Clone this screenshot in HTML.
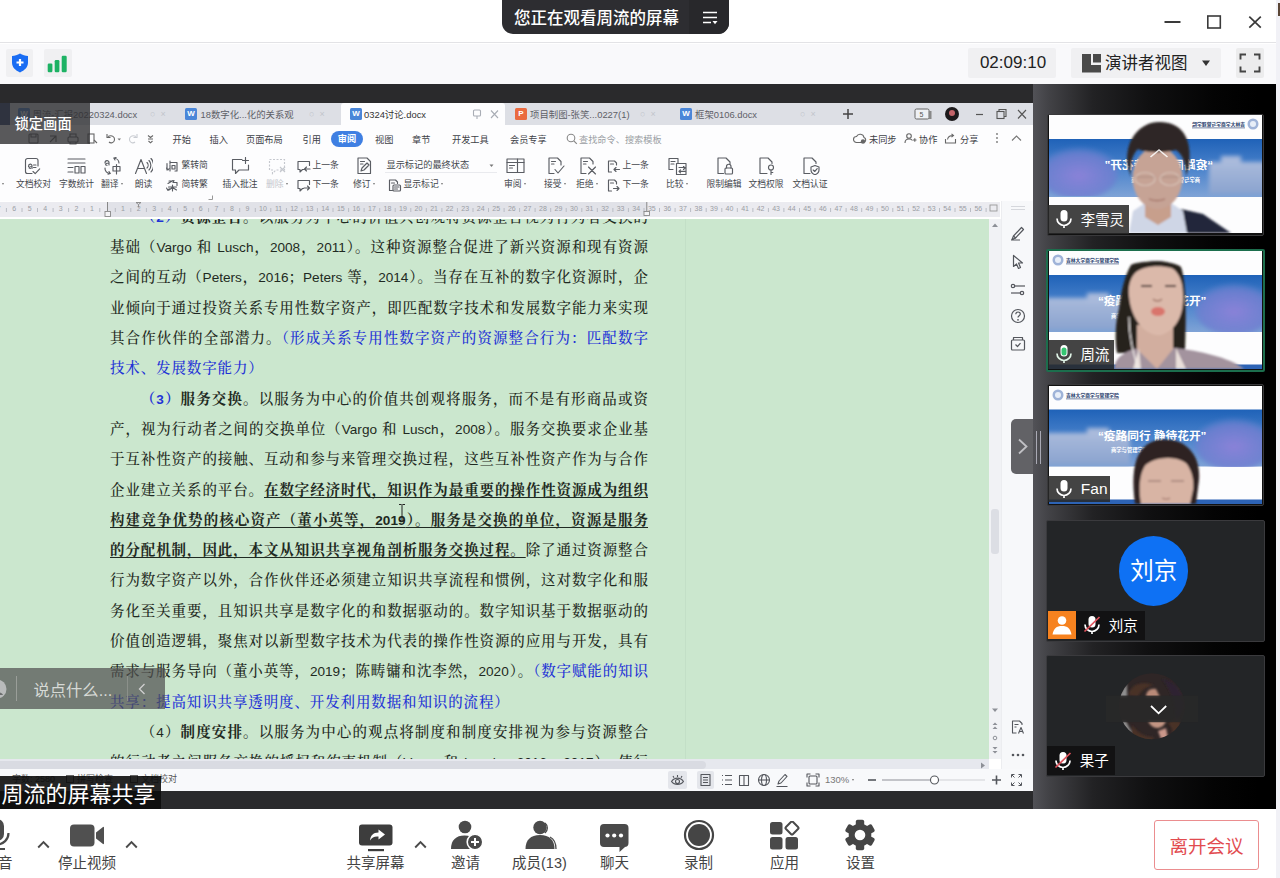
<!DOCTYPE html>
<html lang="zh-CN">
<head>
<meta charset="utf-8">
<title>会议</title>
<style>
*{box-sizing:border-box;margin:0;padding:0}
html,body{width:1280px;height:878px;overflow:hidden;background:#fff}
body{position:relative;font-family:"Liberation Sans","Noto Sans CJK SC",sans-serif;color:#333}
.abs{position:absolute}
i{font-style:normal}
#app{position:absolute;left:0;top:0;width:1280px;height:878px;overflow:hidden;background:#fff}
/* top bars */
#bar1{position:absolute;left:0;top:0;width:1280px;height:43px;background:#fff;border-bottom:1px solid #e3e3e6}
#pill{position:absolute;left:502px;top:0;width:227px;height:34px;background:#2d2d31;border-radius:0 0 11px 11px;color:#fff;font-size:16.5px;line-height:37px;font-weight:500}
#pill .t{position:absolute;left:12px;top:0;white-space:nowrap}
#pill .m{position:absolute;left:187px;top:0;width:40px;height:34px;background:#28282b;border-radius:0 0 11px 0}
#bar2{position:absolute;left:0;top:44px;width:1280px;height:40px;background:#f9f9fb}
.chip{position:absolute;background:#f0f0f2;border-radius:2px}
/* stage */
#stage{position:absolute;left:0;top:84px;width:1033px;height:725px;background:#2a2a2c;overflow:hidden}
#panel{position:absolute;left:1033px;top:84px;width:243px;height:725px;background:linear-gradient(90deg,#525257 0px,#424246 16px,#222224 60px,#101011 115px,#040404 180px,#000 225px)}
#edge{position:absolute;left:1276px;top:0;width:4px;height:878px;background:#f1f1f6}
/* WPS */
#wps{position:absolute;left:0;top:18.5px;width:1032.5px;height:688px;background:#fff;overflow:hidden;font-size:9.2px;color:#44474d}
#tabbar{position:absolute;left:0;top:0;width:100%;height:22px;background:#dddfe5}
#tabact{position:absolute;left:341px;top:0;width:164px;height:23px;background:#fdfdfe;border-radius:3px 3px 0 0}
.wi{position:absolute;top:5.5px;width:12px;height:12px;border-radius:1.5px;color:#fff;font-size:8px;line-height:12px;text-align:center;font-weight:700}
.tt{position:absolute;top:0;height:22px;line-height:23px;font-size:9.400px;color:#5d6067;white-space:nowrap}
.tx{position:absolute;top:0;height:22px;line-height:22px;font-size:9px;color:#c2c5cc;white-space:nowrap}
#menurow{position:absolute;left:0;top:22px;width:100%;height:26px;background:#fdfdfe}
.mn{position:absolute;top:8px;height:14px;line-height:14px;font-size:9.2px;white-space:nowrap;color:#3e4147}
#rev{position:absolute;left:331px;top:6.500px;width:32px;height:15.500px;border-radius:8px;background:#3f7fe2;color:#fff;font-weight:700;text-align:center;line-height:16.500px;font-size:9.2px}
#ribbon{position:absolute;left:0;top:48px;width:100%;height:50px;background:#fdfdfe}
.rl{position:absolute;top:27.800px;width:60px;text-align:center;height:13px;line-height:13px;white-space:nowrap;font-size:8.800px}
.rs{position:absolute;height:13px;line-height:13px;white-space:nowrap;font-size:8.800px}
.rl i,.rs i{display:inline-block;width:0;height:0;border:1.6px solid transparent;border-top:2px solid #777;margin:0 0 0 2.5px;vertical-align:1px}
#dd{position:absolute;left:385px;top:7.500px;width:112px;height:15px;line-height:15px;padding-left:1.5px;font-size:9.2px;border-bottom:1px solid #e9eaee;white-space:nowrap}
#ruler{position:absolute;left:0;top:99.200px;width:1000px;height:15px;background:#ebebf0;overflow:hidden}
#ruler span{position:absolute;top:1.500px;width:16px;text-align:center;font-size:7px;line-height:11px;color:#9a9da4}
#doc{position:absolute;left:0;top:116.500px;width:989px;height:540px;background:#cbe7ce;overflow:hidden}
#txt{position:absolute;left:110px;top:-17.200px;width:538px;font-family:"Liberation Sans","Noto Serif CJK SC",serif;font-size:14.500px;color:#1f2a22;font-weight:500}
#txt p{position:absolute;left:0;width:538px;height:30px;line-height:30px;white-space:nowrap;text-align:justify;text-align-last:justify}
#txt p.ind{left:30.700px;width:507.300px}
#txt p.last{text-align:left;text-align-last:left;letter-spacing:.870px}
#txt p.last .en{letter-spacing:0}
#txt .en{font-family:"Liberation Sans",sans-serif;font-size:13.600px;font-weight:400;letter-spacing:0}
#txt .bl{color:#1f33d6}
#txt .bd{font-weight:700}
#txt .bu{font-weight:700;text-decoration:underline;text-decoration-thickness:1.300px;text-underline-offset:2px}
#txt .bd .en,#txt .bu .en{font-weight:700}
#vscroll{position:absolute;left:989px;top:116.500px;width:12px;height:540px;background:#f1f2f5}
#side{position:absolute;left:1001px;top:98px;width:32px;height:590px;background:#f7f8fa;border-left:1px solid #ecedf0}
#hscroll{position:absolute;left:0;top:656.300px;width:989px;height:10.500px;background:#e6e8ee}
#status{position:absolute;left:0;top:666.800px;width:1032.500px;height:21.500px;background:#f8f9fb}
.st{position:absolute;top:4px;height:13px;line-height:13px;font-size:9px;white-space:nowrap;color:#555}
.cb{display:inline-block;width:8px;height:8px;border:1px solid #666;margin-right:3px;vertical-align:-1px}
.tri{display:inline-block;width:0;height:0;border:1.600px solid transparent;border-top:2px solid #777;margin-left:3px;vertical-align:1px}
.tile{position:absolute;left:14.300px;width:216.500px;height:122px;border:1.500px solid #39393b;border-radius:2px;background:#111;overflow:hidden}
.tile.act{border:2px solid #1c6e4d;left:13px;width:218.500px;height:123px}
.tile.dk{background:#232527;border-color:#3a3a3d;left:13.300px;width:218.300px}
.tile .vid{position:absolute;left:.5px;top:.5px}
.tile.act .vid{left:.5px;top:.5px}
.nm{position:absolute;left:0;bottom:1px;height:29px;background:rgba(40,40,40,.87);color:#fff;white-space:nowrap}
.nm svg{position:absolute;left:7px;top:50%;margin-top:-10px}
.nm span{position:absolute;left:32.500px;top:50%;margin-top:-14.500px;line-height:30px;font-size:14.400px}
.handle{position:absolute;left:2.500px;top:347px;width:7px;height:33px}
.handle i{position:absolute;top:0;width:1.200px;height:33px;background:#a9a9b4}
.handle i+i{left:4.700px}
/* bottom */
#bottom{position:absolute;left:0;top:809px;width:1276px;height:69px;background:#fff}
.blabel{position:absolute;top:45px;font-size:14.500px;line-height:18px;color:#444;white-space:nowrap;text-align:center}
</style>
</head>
<body>
<div id="app">
<div id="bar1">
  <div id="pill"><span class="t">您正在观看周流的屏幕</span><div class="m"></div>
    <svg class="abs" style="left:199px;top:10px" width="18" height="16" viewBox="0 0 18 16"><g stroke="#fff" stroke-width="1.7" fill="none"><path d="M2 2.5h14M2 7.5h14M2 12.5h8"/></g><path d="M11.5 11h5l-2.5 3.2z" fill="#fff"/></svg>
  </div>
  <svg class="abs" style="left:1160px;top:10px" width="110" height="24" viewBox="0 0 110 24"><g stroke="#3a3a3a" fill="none"><path d="M4.5 12h16" stroke-width="2"/><rect x="47.8" y="6" width="12.5" height="12" stroke-width="1.6"/><path d="M89.3 6.7l11.5 11M100.8 6.7l-11.5 11" stroke-width="1.7"/></g></svg>
</div>
<div id="bar2">
  <div class="chip" style="left:6px;top:5px;width:27px;height:28px"></div>
  <svg class="abs" style="left:9px;top:8px" width="22" height="22" viewBox="0 0 22 22"><path d="M11 1.6c2.6 1.7 5.3 2.3 8 2.4v6.6c0 4.6-3.3 7.9-8 9.9-4.700-2-8-5.300-8-9.900V4c2.700-.1 5.400-.7 8-2.400z" fill="#1a6df3"/><path d="M11 7v7M7.500 10.500h7" stroke="#fff" stroke-width="2.200" fill="none"/></svg>
  <div class="chip" style="left:44px;top:5px;width:28px;height:28px"></div>
  <svg class="abs" style="left:44px;top:5px" width="28" height="28" viewBox="0 0 28 28"><g fill="#1db264"><rect x="3.700" y="14.500" width="4.700" height="8.700" rx="1.200"/><rect x="10.700" y="11" width="4.700" height="12.200" rx="1.200"/><rect x="17.700" y="6.800" width="5" height="16.400" rx="1.200"/></g></svg>
  <div class="chip" style="left:968px;top:4px;width:88px;height:30px"></div>
  <div class="abs" style="left:968px;top:4px;width:88px;height:30px;line-height:30px;text-align:center;font-size:17px;color:#222;padding-left:2px">02:09:10</div>
  <div class="chip" style="left:1071px;top:4px;width:150px;height:30px"></div>
  <svg class="abs" style="left:1082px;top:10px" width="20" height="19" viewBox="0 0 20 19"><path d="M0 0h9v11h10v7.500H0z" fill="#4a4a4a"/><rect x="11" y="0" width="8" height="8.500" fill="#4a4a4a"/></svg>
  <div class="abs" style="left:1105px;top:4px;height:30px;line-height:30px;font-size:16.500px;color:#222;white-space:nowrap">演讲者视图</div>
  <svg class="abs" style="left:1201px;top:16px" width="10" height="7" viewBox="0 0 10 7"><path d="M1 .500h8L5 6z" fill="#333"/></svg>
  <div class="chip" style="left:1236px;top:4px;width:28px;height:30px;background:#ececed"></div>
  <svg class="abs" style="left:1239px;top:9px" width="22" height="20" viewBox="0 0 22 20"><g stroke="#444" stroke-width="1.900" fill="none"><path d="M1.500 6.500V1.500h5.500M15 1.500h5.500v5M20.500 13.500v5H15M7 18.500H1.500v-5"/></g></svg>
</div>
<div id="stage">
<div id="wps">
<div id="tabbar">
<div class="abs" style="left:0;top:0;width:10px;height:22px;background:#2f4273"></div>
<div class="wi" style="left:18px;background:#4a86d8">W</div>
<div class="tt" style="left:32.5px">周流-汇报20220324.docx</div>
<div class="tx" style="left:150px">○&nbsp; ×</div>
<div class="wi" style="left:185px;background:#4a86d8">W</div>
<div class="tt" style="left:200.5px">18数字化...化的关系观</div>
<div class="tx" style="left:309px">○&nbsp; ×</div>
<div id="tabact"></div>
<div class="wi" style="left:350px;background:#4a86d8">W</div>
<div class="tt" style="left:364px;color:#333">0324讨论.docx</div>
<svg class="abs" style="left:472px;top:6px" width="28" height="11" viewBox="0 0 28 11"><g stroke="#a9adb5" stroke-width="1.1" fill="none"><rect x="1.5" y="1" width="7" height="6" rx="1"/><path d="M5 7v3M19 1.500l7 7.500M26 1.500l-7 7.500"/></g></svg>
<div class="wi" style="left:515px;background:#ea6a3f">P</div>
<div class="tt" style="left:530px">项目制图-张笑...0227(1)</div>
<div class="tx" style="left:640px">○&nbsp; ×</div>
<div class="wi" style="left:680px;background:#4a86d8">W</div>
<div class="tt" style="left:695px">框架0106.docx</div>
<div class="tx" style="left:800px">○&nbsp; ×</div>
<svg class="abs" style="left:842px;top:5px" width="12" height="12" viewBox="0 0 12 12"><path d="M6 1v10M1 6h10" stroke="#444" stroke-width="1.500"/></svg>
<svg class="abs" style="left:914px;top:4px" width="120" height="15" viewBox="0 0 120 15"><rect x="1" y="2" width="14" height="10" rx="1.500" stroke="#666" fill="#eef0f4" stroke-width="1"/><rect x="15" y="4" width="2.500" height="8" fill="#888"/><text x="5.500" y="10" font-size="7" fill="#555" font-family="Liberation Sans,sans-serif">5</text><circle cx="38" cy="7" r="7" fill="#1d1a1c"/><circle cx="38" cy="6" r="3" fill="#c4646a"/><path d="M62 7.500h7" stroke="#555" stroke-width="1.200"/><g stroke="#555" stroke-width="1.100" fill="none"><rect x="83" y="4.500" width="7" height="7"/><path d="M85 4.500V2.500h7v7h-2"/><path d="M104 3l8 8.500M112 3l-8 8.500"/></g></svg>
</div>
<div id="menurow">
<svg class="abs" style="left:28px;top:7px" width="135" height="14" viewBox="0 0 135 14"><g stroke="#666" stroke-width="1.100" fill="none"><rect x="1" y="2" width="9" height="9" rx="1"/><path d="M3 2v3h5V2"/><path d="M22 4h6v6M28 4l-6 6"/><rect x="40" y="5" width="10" height="5" rx="1"/><path d="M42 5V2h6v3M42 10v2h6v-2"/><rect x="60" y="2" width="6" height="9"/><path d="M66 8l3 3"/><path d="M80 4.500c4-2 7 .500 6.500 3.500s-4 3.500-5.500 2M79 2v3.500h3.500"/></g><path d="M89.500 6.500h3.500l-1.750 2z" fill="#777"/><g stroke="#c9ccd2" stroke-width="1.100" fill="none"><path d="M108 4.500c-4-2-7 .500-6.500 3.500s4 3.500 5.500 2M109 2v3.500h-3.500"/></g><g stroke="#666" stroke-width="1.100" fill="none"><path d="M120 3.500l2.500 2 2.500-2M120 7h5M120.500 9l2 1.800 2-1.800"/></g></svg>
<div class="mn" style="left:172.5px">开始</div>
<div class="mn" style="left:209.5px">插入</div>
<div class="mn" style="left:246px">页面布局</div>
<div class="mn" style="left:302.5px">引用</div>
<div class="mn" style="left:375px">视图</div>
<div class="mn" style="left:412px">章节</div>
<div class="mn" style="left:452px">开发工具</div>
<div class="mn" style="left:510px">会员专享</div>
<div id="rev">审阅</div>
<svg class="abs" style="left:566px;top:8px" width="12" height="12" viewBox="0 0 12 12"><circle cx="5" cy="5" r="3.800" stroke="#888" fill="none" stroke-width="1.100"/><path d="M7.800 7.800l3 3" stroke="#888" stroke-width="1.200"/></svg>
<div class="mn" style="left:579px;color:#9a9da3">查找命令、搜索模板</div>
<svg class="abs" style="left:853px;top:8px" width="14" height="11" viewBox="0 0 14 11"><path d="M3.500 9.500a3 3 0 0 1 0-6a4 4 0 0 1 7.500 1a2.600 2.600 0 0 1-.500 5z" stroke="#666" fill="none" stroke-width="1.100"/><circle cx="10" cy="8.500" r="2.200" fill="#666"/></svg>
<div class="mn" style="left:869px">未同步</div>
<svg class="abs" style="left:904px;top:8px" width="13" height="11" viewBox="0 0 13 11"><circle cx="5" cy="3" r="2.300" stroke="#666" fill="none" stroke-width="1.100"/><path d="M1 10c0-3 2-4 4-4s3 .500 3.500 1.500M9 7h3.500M10.800 5.200v3.600" stroke="#666" fill="none" stroke-width="1.100"/></svg>
<div class="mn" style="left:919px">协作</div>
<svg class="abs" style="left:944px;top:8px" width="13" height="11" viewBox="0 0 13 11"><path d="M1.500 6v4h10V6M3.500 6.500c.500-3 3-4 5.500-4M7.500.800l2 1.700-2 1.700" stroke="#666" fill="none" stroke-width="1.100"/></svg>
<div class="mn" style="left:960px">分享</div>
<svg class="abs" style="left:994px;top:7px" width="30" height="13" viewBox="0 0 30 13"><g fill="#777"><circle cx="3" cy="2" r=".900"/><circle cx="3" cy="6" r=".900"/><circle cx="3" cy="10" r=".900"/></g><path d="M18 8.500l4.500-4.500 4.500 4.500" stroke="#777" fill="none" stroke-width="1.100"/></svg>
</div>
<div id="ribbon">
<div class="rl" style="left:-28px"><i></i></div>
<svg class="abs" style="left:24.0px;top:6.500px" width="19" height="18" viewBox="0 0 19 18"><g stroke="#5a5d63" stroke-width="1.150" fill="none" stroke-linejoin="round" stroke-linecap="round"><path d="M3.500 1.500h8.500a2 2 0 0 1 2 2V9M3.500 1.500a2 2 0 0 0-2 2v11a2 2 0 0 0 2 2H8"/><path d="M4.500 9.500c0-3 3.500-3 3.500-.500v2.500M8 9.500c-3 0-4 2-1.500 2M9.500 8h2.500M9.500 10.500h2.500M9 14.500l2.200 2.200 4.500-4.800"/></g></svg>
<div class="rl" style="left:3.5px">文档校对</div>
<svg class="abs" style="left:67.0px;top:6.500px" width="19" height="18" viewBox="0 0 19 18"><g stroke="#5a5d63" stroke-width="1.150" fill="none" stroke-linejoin="round" stroke-linecap="round"><path d="M1 2h17M1 6h17M1 10.500h5M1 15h5"/><rect x="8" y="9.500" width="4" height="6.500"/><rect x="14" y="9.500" width="4" height="6.500"/></g></svg>
<div class="rl" style="left:46.5px">字数统计</div>
<svg class="abs" style="left:102.5px;top:6.500px" width="19" height="18" viewBox="0 0 19 18"><g stroke="#5a5d63" stroke-width="1.150" fill="none" stroke-linejoin="round" stroke-linecap="round"><path d="M2 6c0-3 4-3 4-.500V8M6 6c-3.500 0-4.500 2-2 2.300M2 11a5 5 0 0 0 5 5.500M6 14.500l1.300 2-2.300.600"/><rect x="10" y="9.500" width="7" height="4.500"/><path d="M13.500 7.500v9.500M16 6A5 5 0 0 0 11 1.200M12 3l-1.200-2 2.300-.500"/></g></svg>
<div class="rl" style="left:82px">翻译<i></i></div>
<svg class="abs" style="left:134.0px;top:6.500px" width="19" height="18" viewBox="0 0 19 18"><g stroke="#5a5d63" stroke-width="1.150" fill="none" stroke-linejoin="round" stroke-linecap="round"><path d="M1.500 16.500L7 2.500l5.500 14M3.500 11.500h7M13 5.500c1.500 1.500 1.500 4 0 5.500M15 3.500c2.500 2.500 2.500 7 0 9.500M17 1.500c3.500 3.500 3.500 10 0 13.500"/></g></svg>
<div class="rl" style="left:113.5px">朗读</div>
<svg class="abs" style="left:166px;top:9px" width="14" height="13" viewBox="0 0 14 13"><g stroke="#5a5d63" stroke-width="1.150" fill="none" stroke-linejoin="round" stroke-linecap="round"><path d="M1 3.500V10M4 1v3M4 2.500h7v8.500h-2M4 5v6M6 5.500h3v3.500H6z"/><path d="M.500 8l1.500 2 1.200-1.500" /></g></svg>
<div class="rs" style="left:181.5px;top:8.5px">繁转简</div>
<svg class="abs" style="left:166px;top:28px" width="14" height="13" viewBox="0 0 14 13"><g stroke="#5a5d63" stroke-width="1.150" fill="none" stroke-linejoin="round" stroke-linecap="round"><path d="M3 2h3M2 4.500l5-3M8 1.500l-1 2h4v3M2.500 8h8M6.500 6v6M3 11l3.500-2.500 4 2.500"/><path d="M.500 9l1.500 2.500 1.200-1.800"/></g></svg>
<div class="rs" style="left:181.5px;top:27.5px">简转繁</div>
<svg class="abs" style="left:208px;top:44px" width="5" height="5" viewBox="0 0 5 5"><path d="M4.500 .500v4H.500" stroke="#999" fill="none"/></svg>
<svg class="abs" style="left:230.5px;top:6.500px" width="19" height="18" viewBox="0 0 19 18"><g stroke="#5a5d63" stroke-width="1.150" fill="none" stroke-linejoin="round" stroke-linecap="round"><path d="M11 2.500H1.500v10.500h3v3.500l3.500-3.500h9.500V8M14.500 .500v6M11.500 3.500h6"/></g></svg>
<div class="rl" style="left:210px">插入批注</div>
<svg class="abs" style="left:267.5px;top:6.500px" width="19" height="18" viewBox="0 0 19 18"><g stroke="#c5c8ce" stroke-width="1.150" fill="none" stroke-dasharray="2 1.500"><path d="M1.500 2.500h15v10.500H8l-3.500 3.500v-3.500h-3z"/></g><path d="M12 10l5 5M17 10l-5 5" stroke="#c5c8ce" stroke-width="1.150"/></svg>
<div class="rl" style="left:247px;color:#c3c6cc">删除<i></i></div>
<svg class="abs" style="left:297px;top:9px" width="14" height="13" viewBox="0 0 14 13"><g stroke="#5a5d63" stroke-width="1.150" fill="none" stroke-linejoin="round" stroke-linecap="round"><path d="M1 1.500h11.500v4M1 1.500v8h2v2.500l2.500-2.500h2"/><path d="M13 9H7.500M9.500 7L7.500 9l2 2"/></g></svg>
<div class="rs" style="left:312.5px;top:8.5px">上一条</div>
<svg class="abs" style="left:297px;top:28px" width="14" height="13" viewBox="0 0 14 13"><g stroke="#5a5d63" stroke-width="1.150" fill="none" stroke-linejoin="round" stroke-linecap="round"><path d="M1 1.500h11.500v4M1 1.500v8h2v2.500l2.500-2.500h1"/><path d="M7 9h5.500M10.500 7l2 2-2 2"/></g></svg>
<div class="rs" style="left:312.5px;top:27.5px">下一条</div>
<svg class="abs" style="left:354.5px;top:6.500px" width="19" height="18" viewBox="0 0 19 18"><g stroke="#5a5d63" stroke-width="1.150" fill="none" stroke-linejoin="round" stroke-linecap="round"><path d="M3 1h9l3.500 3.500v12H3z"/><path d="M5.500 4.500h4M5.500 7h2.500M6 14l1-3 5-5 2 2-5 5z"/></g></svg>
<div class="rl" style="left:334px">修订<i></i></div>
<div id="dd">显示标记的最终状态<svg class="abs" style="right:3px;top:6px" width="5" height="4" viewBox="0 0 5 4"><path d="M.500 .500h4L2.500 3z" fill="#777"/></svg></div>
<svg class="abs" style="left:388px;top:28px" width="14" height="13" viewBox="0 0 14 13"><g stroke="#5a5d63" stroke-width="1.150" fill="none" stroke-linejoin="round" stroke-linecap="round"><path d="M9.500 4.500V3L7.500 1H1.500v10.500h3"/><path d="M3.500 4h3"/><rect x="5" y="6" width="7.500" height="6" rx="1"/><path d="M6.500 8h4.500M6.500 10h3"/></g></svg>
<div class="rs" style="left:403.5px;top:27.5px">显示标记<i></i></div>
<svg class="abs" style="left:505.5px;top:6.500px" width="19" height="18" viewBox="0 0 19 18"><g stroke="#5a5d63" stroke-width="1.150" fill="none" stroke-linejoin="round" stroke-linecap="round"><rect x="1" y="2" width="17" height="13.500"/><path d="M11.500 2v13.500M1 5.500h17M3.500 8.500h5M3.500 11h3"/></g></svg>
<div class="rl" style="left:485px">审阅<i></i></div>
<svg class="abs" style="left:545.5px;top:6.500px" width="19" height="18" viewBox="0 0 19 18"><g stroke="#5a5d63" stroke-width="1.150" fill="none" stroke-linejoin="round" stroke-linecap="round"><path d="M15 8V4.500L11.500 1H3v15.500h5"/><path d="M5.500 4.500h4M5.500 7h2.500M9 12.500l3 3.500 6-7"/></g></svg>
<div class="rl" style="left:525px">接受<i></i></div>
<svg class="abs" style="left:577.5px;top:6.500px" width="19" height="18" viewBox="0 0 19 18"><g stroke="#5a5d63" stroke-width="1.150" fill="none" stroke-linejoin="round" stroke-linecap="round"><path d="M15 7V4.500L11.500 1H3v15.500h5"/><path d="M5.500 4.500h4M5.500 7h2.500M10.500 10l7 7M17.500 10l-7 7"/></g></svg>
<div class="rl" style="left:557px">拒绝<i></i></div>
<svg class="abs" style="left:607px;top:9px" width="14" height="13" viewBox="0 0 14 13"><g stroke="#5a5d63" stroke-width="1.150" fill="none" stroke-linejoin="round" stroke-linecap="round"><path d="M9.500 5V3L7.500 1H1.500v11h3"/><path d="M3.500 4h3M12.500 9.500H7M9 7.500l-2 2 2 2"/></g></svg>
<div class="rs" style="left:622.5px;top:8.5px">上一条</div>
<svg class="abs" style="left:607px;top:28px" width="14" height="13" viewBox="0 0 14 13"><g stroke="#5a5d63" stroke-width="1.150" fill="none" stroke-linejoin="round" stroke-linecap="round"><path d="M9.500 5V3L7.500 1H1.500v11h3"/><path d="M3.500 4h3M6.500 9.500H12M10 7.500l2 2-2 2"/></g></svg>
<div class="rs" style="left:622.5px;top:27.5px">下一条</div>
<svg class="abs" style="left:667.5px;top:6.500px" width="19" height="18" viewBox="0 0 19 18"><g stroke="#5a5d63" stroke-width="1.150" fill="none" stroke-linejoin="round" stroke-linecap="round"><path d="M1 1.500h9v4M1 1.500v11h4M3 4.500h4M3 7h3"/><path d="M8.500 6.500h9.500v11H8.500zM15.500 9.500l1.500 1.500-1.500 1.500M11 10.500h6M12.500 12.800L11 14.300l1.500 1.500M17 14.300h-6"/></g></svg>
<div class="rl" style="left:647px">比较<i></i></div>
<svg class="abs" style="left:714.5px;top:6.500px" width="19" height="18" viewBox="0 0 19 18"><g stroke="#5a5d63" stroke-width="1.150" fill="none" stroke-linejoin="round" stroke-linecap="round"><path d="M15 7V5L11 1H3v15.500h5.500"/><rect x="10" y="11" width="7.500" height="6" rx="1"/><path d="M11.500 11V9.500a2.200 2.200 0 0 1 4.500 0V11"/></g></svg>
<div class="rl" style="left:694px">限制编辑</div>
<svg class="abs" style="left:756.5px;top:6.500px" width="19" height="18" viewBox="0 0 19 18"><g stroke="#5a5d63" stroke-width="1.150" fill="none" stroke-linejoin="round" stroke-linecap="round"><path d="M15 6.500V5L11 1H3v15.500h7"/><circle cx="14" cy="10.500" r="2.500"/><path d="M14 13v4.500M14 15.500h1.800"/></g></svg>
<div class="rl" style="left:736px">文档权限</div>
<svg class="abs" style="left:800.5px;top:6.500px" width="19" height="18" viewBox="0 0 19 18"><g stroke="#5a5d63" stroke-width="1.150" fill="none" stroke-linejoin="round" stroke-linecap="round"><path d="M15 6.500V5L11 1H3v15.500h6"/><path d="M14 8.500l4 1.500v3c0 2.500-2 4-4 4.800-2-.800-4-2.300-4-4.800v-3zM12.200 13l1.500 1.500 2.500-2.800"/></g></svg>
<div class="rl" style="left:780px">文档认证</div>
</div>
<div id="ruler">
<div class="abs" style="left:108px;top:0;width:539px;height:15px;background:#e1e2e8"></div>
<span style="left:-9.4px">7</span>
<span style="left:6.2px">6</span>
<span style="left:21.8px">5</span>
<span style="left:37.3px">4</span>
<span style="left:52.8px">3</span>
<span style="left:68.4px">2</span>
<span style="left:84.0px">1</span>
<span style="left:115.0px">1</span>
<span style="left:130.6px">2</span>
<span style="left:146.2px">3</span>
<span style="left:161.7px">4</span>
<span style="left:177.2px">5</span>
<span style="left:192.8px">6</span>
<span style="left:208.4px">7</span>
<span style="left:223.9px">8</span>
<span style="left:239.5px">9</span>
<span style="left:255.0px">10</span>
<span style="left:270.6px">11</span>
<span style="left:286.1px">12</span>
<span style="left:301.6px">13</span>
<span style="left:317.2px">14</span>
<span style="left:332.8px">15</span>
<span style="left:348.3px">16</span>
<span style="left:363.9px">17</span>
<span style="left:379.4px">18</span>
<span style="left:394.9px">19</span>
<span style="left:410.5px">20</span>
<span style="left:426.1px">21</span>
<span style="left:441.6px">22</span>
<span style="left:457.2px">23</span>
<span style="left:472.7px">24</span>
<span style="left:488.2px">25</span>
<span style="left:503.8px">26</span>
<span style="left:519.4px">27</span>
<span style="left:534.9px">28</span>
<span style="left:550.5px">29</span>
<span style="left:566.0px">30</span>
<span style="left:581.5px">31</span>
<span style="left:597.1px">32</span>
<span style="left:612.6px">33</span>
<span style="left:628.2px">34</span>
<span style="left:643.8px">35</span>
<span style="left:659.3px">36</span>
<span style="left:674.9px">37</span>
<span style="left:690.4px">38</span>
<span style="left:706.0px">39</span>
<span style="left:721.5px">40</span>
<span style="left:737.1px">41</span>
<span style="left:752.6px">42</span>
<span style="left:768.1px">43</span>
<span style="left:783.7px">44</span>
<span style="left:799.2px">45</span>
<span style="left:814.8px">46</span>
<span style="left:830.4px">47</span>
<span style="left:845.9px">48</span>
<span style="left:861.5px">49</span>
<span style="left:877.0px">50</span>
<span style="left:892.6px">51</span>
<span style="left:908.1px">52</span>
<span style="left:923.7px">53</span>
<span style="left:939.2px">54</span>
<span style="left:954.8px">55</span>
<span style="left:970.3px">56</span>
<svg class="abs" style="left:0;top:0" width="1000" height="15" viewBox="0 0 1000 15"><path d="M6.4 6v4M22.0 6v4M37.5 6v4M53.1 6v4M68.6 6v4M84.2 6v4M99.8 6v4M115.3 6v4M130.8 6v4M146.4 6v4M162.0 6v4M177.5 6v4M193.1 6v4M208.6 6v4M224.2 6v4M239.7 6v4M255.3 6v4M270.8 6v4M286.4 6v4M301.9 6v4M317.4 6v4M333.0 6v4M348.6 6v4M364.1 6v4M379.7 6v4M395.2 6v4M410.8 6v4M426.3 6v4M441.9 6v4M457.4 6v4M473.0 6v4M488.5 6v4M504.1 6v4M519.6 6v4M535.1 6v4M550.7 6v4M566.2 6v4M581.8 6v4M597.3 6v4M612.9 6v4M628.4 6v4M644.0 6v4M659.5 6v4M675.1 6v4M690.6 6v4M706.2 6v4M721.8 6v4M737.3 6v4M752.9 6v4M768.4 6v4M783.9 6v4M799.5 6v4M815.0 6v4M830.6 6v4M846.1 6v4M861.7 6v4M877.2 6v4M892.8 6v4M908.4 6v4M923.9 6v4M939.5 6v4M955.0 6v4M970.5 6v4M986.1 6v4M1001.6 6v4" stroke="#b9bcc4" stroke-width="1" fill="none"/><path d="M107.500 0v9" stroke="#888" stroke-width="1"/><rect x="105" y="9.500" width="5.500" height="5" fill="#f4f4f6" stroke="#888" stroke-width=".900"/><path d="M138.500 2.500l2.500-2h-5z M138.500 2.500v3" stroke="#888" fill="none" stroke-width=".900"/><path d="M646.800 0v9" stroke="#888" stroke-width="1"/><rect x="644" y="9.500" width="5.500" height="4" fill="#f4f4f6" stroke="#888" stroke-width=".900"/><rect x="990" y="3" width="7" height="6" stroke="#999" fill="none" stroke-width=".900"/></svg>
</div>
<div id="doc">
<div class="abs" style="left:685px;top:0;width:1px;height:540px;background:#c3dfc7"></div>
<div id="txt">
<p class="ind" style="top:0.0px"><span class="bl bd">（<b class="en">2</b>）</span><span class="bd">资源整合</span>。以服务为中心的价值共创观将资源整合视为行为者交换的</p>
<p class="" style="top:30.3px">基础（<b class="en">Vargo</b> 和 <b class="en">Lusch</b>，<b class="en">2008</b>，<b class="en">2011</b>）。这种资源整合促进了新兴资源和现有资源</p>
<p class="" style="top:60.6px">之间的互动（<b class="en">Peters</b>，<b class="en">2016</b>；<b class="en">Peters</b> 等，<b class="en">2014</b>）。当存在互补的数字化资源时，企</p>
<p class="" style="top:90.9px">业倾向于通过投资关系专用性数字资产，即匹配数字技术和发展数字能力来实现</p>
<p class="" style="top:121.2px">其合作伙伴的全部潜力。<span class="bl">（形成关系专用性数字资产的资源整合行为：匹配数字</span></p>
<p class="last" style="top:151.5px"><span class="bl">技术、发展数字能力）</span></p>
<p class="ind" style="top:181.8px"><span class="bl bd">（<b class="en">3</b>）</span><span class="bd">服务交换</span>。以服务为中心的价值共创观将服务，而不是有形商品或资</p>
<p class="" style="top:212.1px">产，视为行动者之间的交换单位（<b class="en">Vargo</b> 和 <b class="en">Lusch</b>，<b class="en">2008</b>）。服务交换要求企业基</p>
<p class="" style="top:242.4px">于互补性资产的接触、互动和参与来管理交换过程，这些互补性资产作为与合作</p>
<p class="" style="top:272.7px">企业建立关系的平台。<span class="bu">在数字经济时代，知识作为最重要的操作性资源成为组织</span></p>
<p class="" style="top:303.0px"><span class="bu">构建竞争优势的核心资产（董小英等，<b class="en">2019</b>）。服务是交换的单位，资源是服务</span></p>
<p class="" style="top:333.3px"><span class="bu">的分配机制，因此，本文从知识共享视角剖析服务交换过程。</span>除了通过资源整合</p>
<p class="" style="top:363.6px">行为数字资产以外，合作伙伴还必须建立知识共享流程和惯例，这对数字化和服</p>
<p class="" style="top:393.9px">务化至关重要，且知识共享是数字化的和数据驱动的。数字知识基于数据驱动的</p>
<p class="" style="top:424.2px">价值创造逻辑，聚焦对以新型数字技术为代表的操作性资源的应用与开发，具有</p>
<p class="" style="top:454.5px">需求与服务导向（董小英等，<b class="en">2019</b>；陈畴镛和沈李然，<b class="en">2020</b>）。<span class="bl">（数字赋能的知识</span></p>
<p class="last" style="top:484.8px"><span class="bl">共享：提高知识共享透明度、开发利用数据和知识的流程）</span></p>
<p class="ind" style="top:515.1px">（<b class="en">4</b>）<span class="bd">制度安排</span>。以服务为中心的观点将制度和制度安排视为参与资源整合</p>
<p class="" style="top:545.4px">的行动者之间服务交换的授权和约束机制（<b class="en">Vargo</b> 和 <b class="en">Lusch</b>，<b class="en">2016</b>，<b class="en">2017</b>）。使行</p>
</div>
</div>
<div id="vscroll">
  <svg class="abs" style="left:2px;top:3px" width="8" height="6" viewBox="0 0 8 6"><path d="M1 5l3-3.500 3 3.500z" fill="#8d9097"/></svg>
  <div class="abs" style="left:2px;top:290px;width:8px;height:45px;background:#dcdee4;border-radius:3px"></div>
  <svg class="abs" style="left:1px;top:488px" width="10" height="50" viewBox="0 0 10 50"><g fill="#8d9097"><path d="M2 1.500h6L5 5z"/><path d="M2.500 18l2.500-2.500 2.500 2.500zM2.500 22l2.500-2.500 2.500 2.500z"/><circle cx="5" cy="31" r="1.800" fill="none" stroke="#8d9097"/><path d="M2.500 40l2.500 2.500 2.500-2.500zM2.500 44l2.500 2.500 2.500-2.500z"/></g></svg>
</div>
<div id="side">
  <svg class="abs" style="left:9px;top:4px" width="14" height="6" viewBox="0 0 14 6"><path d="M0 1.500h14M0 4.500h14" stroke="#d5d7dc" stroke-width="1"/></svg>
  <svg class="abs" style="left:8px;top:25px" width="16" height="15" viewBox="0 0 16 15"><g stroke="#54575d" stroke-width="1.200" fill="none" stroke-linejoin="round"><path d="M3.500 10l2 2 8-8.500-2-2z"/><path d="M3.500 10l-1.500 3.500 3.500-1.500M1 14h9"/></g></svg>
  <svg class="abs" style="left:9px;top:53px" width="14" height="16" viewBox="0 0 14 16"><path d="M2.500 1.500v11l3-2.500 2 4.500 2-1-2-4.500h4z" stroke="#54575d" stroke-width="1.200" fill="none" stroke-linejoin="round"/></svg>
  <svg class="abs" style="left:8px;top:82px" width="16" height="13" viewBox="0 0 16 13"><g stroke="#54575d" stroke-width="1.200" fill="none"><circle cx="3" cy="3" r="1.700"/><path d="M4.700 3H15"/><circle cx="12" cy="10" r="1.700"/><path d="M1 10h9.300"/></g></svg>
  <svg class="abs" style="left:8px;top:107px" width="16" height="16" viewBox="0 0 16 16"><g stroke="#54575d" stroke-width="1.200" fill="none"><circle cx="8" cy="8" r="6.500"/><path d="M5.800 6.300c0-3 4.500-3 4.500-.300 0 1.700-2.300 1.700-2.300 3.500"/></g><circle cx="8" cy="11.800" r=".900" fill="#54575d"/></svg>
  <svg class="abs" style="left:8px;top:135px" width="16" height="15" viewBox="0 0 16 15"><g stroke="#54575d" stroke-width="1.200" fill="none" stroke-linejoin="round"><rect x="1.500" y="4" width="13" height="10" rx="1"/><path d="M3.500 4V1.500h9V4M5.500 8.500l2 2 3-3.300"/></g></svg>
  <svg class="abs" style="left:8px;top:519px" width="16" height="15" viewBox="0 0 16 15"><g stroke="#54575d" stroke-width="1.100" fill="none" stroke-linejoin="round"><path d="M12 5V3.500L9.500 1H2.500v12h4M4.500 4.500h4M4.500 7h2"/><path d="M8.500 13.500l2.500-6 2.500 6M9.300 11.500h3.400"/></g></svg>
  <svg class="abs" style="left:9px;top:552px" width="14" height="4" viewBox="0 0 14 4"><g fill="#54575d"><circle cx="2" cy="2" r="1.300"/><circle cx="7" cy="2" r="1.300"/><circle cx="12" cy="2" r="1.300"/></g></svg>
</div>
<div id="hscroll"><div class="abs" style="left:0;top:2px;width:706px;height:8px;background:#d9dbe2;border-radius:0 4px 4px 0"></div>
  <svg class="abs" style="left:980px;top:3px" width="6" height="7" viewBox="0 0 6 7"><path d="M1 .500l4 3-4 3z" fill="#8d9097"/></svg></div>
<div id="status">
  <div class="st" style="left:12px">字数: 2580</div>
  <div class="st" style="left:66px"><i class="cb"></i>拼写检查</div>
  <div class="st" style="left:130px"><i class="cb"></i>文档校对</div>
  <div class="abs" style="left:668px;top:1.500px;width:19px;height:18px;background:#e4e6eb;border-radius:2px"></div>
  <div class="abs" style="left:697px;top:1.500px;width:17px;height:18px;background:#e4e6eb;border-radius:2px"></div>
  <svg class="abs" style="left:668px;top:2px" width="360" height="18" viewBox="0 0 360 18"><g stroke="#54575d" stroke-width="1.100" fill="none" stroke-linejoin="round">
   <path d="M3.500 10.500c3-4.500 9-4.500 12 0-3 4-9 4-12 0z"/><circle cx="9.500" cy="10.500" r="2"/><path d="M5 5l1 1.800M9.500 4v2M14 5l-1 1.800"/>
   <rect x="33" y="3.500" width="9" height="11"/><path d="M35 6.500h5M35 9h5M35 11.500h5"/>
   <path d="M54 4.500h1M57 4.500h7M54 9h1M57 9h7M54 13.500h1M57 13.500h7"/>
   <path d="M71.500 4.500h4.500v10h-4.500zM76 4.500h4.500v10H76z"/>
   <circle cx="96" cy="9" r="5.500"/><ellipse cx="96" cy="9" rx="2.500" ry="5.500"/><path d="M90.500 9h11"/>
   <path d="M110 13l1-3 6-6.500 2 2-6 6.500zM108.500 15.500h11"/>
   <rect x="141" y="5" width="8" height="8" rx="1"/><path d="M139 6.500V3h3.500M147.500 3H151v3.500M151 11.500V15h-3.500M142.500 15H139v-3.500"/>
   <path d="M200 9h8" stroke-width="1.600"/>
   <path d="M214 9h52" stroke="#8d9097"/><path d="M271 9h46" stroke="#cfd1d6"/>
   <circle cx="266.500" cy="9" r="4" fill="#fff"/>
   <path d="M324 9h9M328.500 4.500v9" stroke-width="1.600"/>
   <path d="M343.500 6.500v-3h3M350.500 3.500h3v3M353.500 11.500v3h-3M346.500 14.500h-3v-3M344 4l2.500 2.500M353 4l-2.500 2.500M353 14l-2.500-2.500M344 14l2.500-2.500" stroke-width="1"/>
  </g></svg>
  <div class="st" style="left:825px;color:#777;font-size:9.500px">130%<i class="tri"></i></div>
</div>
</div>
<div class="abs" style="left:0;top:18.500px;width:90px;height:41px;background:rgba(48,48,50,.8)"></div>
<div class="abs" style="left:14.500px;top:29.500px;font-size:14.300px;line-height:20px;color:#fff;font-weight:500;white-space:nowrap">锁定画面</div>
<div class="abs" style="left:0;top:583.800px;width:165px;height:41.200px;background:rgba(80,80,80,.715)"></div>
<svg class="abs" style="left:-14.500px;top:594px" width="22" height="22" viewBox="0 0 22 22"><circle cx="11" cy="11" r="9.500" fill="#b9bbbb"/><circle cx="11" cy="8.500" r="3" fill="#6b6d6d"/><path d="M5 17c1-4 11-4 12 0" fill="#6b6d6d"/></svg>
<div class="abs" style="left:15.500px;top:592px;width:1px;height:25px;background:#9a9e99"></div><div class="abs" style="left:126.500px;top:592px;width:1px;height:25px;background:#8b908a"></div>
<div class="abs" style="left:33.500px;top:593.500px;font-size:16.300px;line-height:24px;color:#d6d9d5;white-space:nowrap">说点什么...</div>
<svg class="abs" style="left:138px;top:599px" width="8" height="12" viewBox="0 0 8 12"><path d="M6.500 1L1.500 6l5 5" stroke="#d0d0d0" stroke-width="1.300" fill="none"/></svg>
<div class="abs" style="left:0;top:692px;width:161px;height:33px;background:rgba(12,12,12,.9)"></div>
<div class="abs" style="left:1.500px;top:695.500px;font-size:22px;line-height:30px;color:#fff;white-space:nowrap">周流的屏幕共享</div>
<svg class="abs" style="left:1011px;top:335px" width="22" height="55" viewBox="0 0 22 55"><path d="M22 0H5a5 5 0 0 0-5 5v45a5 5 0 0 0 5 5h17z" fill="#626266"/><path d="M8 20.500l7.500 7-7.500 7" stroke="#c0c0c4" stroke-width="1.800" fill="none"/></svg>
<svg class="abs" style="left:398px;top:420px" width="8" height="17" viewBox="0 0 8 17"><path d="M1 .500h2.500M4.500 .500H7M4 .500v16M1 16.500h2.500M4.500 16.500H7" stroke="#222" stroke-width="1" fill="none"/></svg>
</div>
<div id="panel">
<svg width="0" height="0" style="position:absolute"><defs>
  <filter id="b1" x="-20%" y="-20%" width="140%" height="140%"><feGaussianBlur stdDeviation="1.100"/></filter>
  <filter id="b2" x="-20%" y="-20%" width="140%" height="140%"><feGaussianBlur stdDeviation="2.200"/></filter>
  <linearGradient id="sky" x1="0" y1="0" x2="0" y2="1"><stop offset="0" stop-color="#1f62b8"/><stop offset=".55" stop-color="#4f86cd"/><stop offset="1" stop-color="#7fa3d6"/></linearGradient>
  <radialGradient id="flw" cx=".5" cy=".55" r=".6"><stop offset="0" stop-color="#8a82d8"/><stop offset=".7" stop-color="#6f7fd0" stop-opacity=".85"/><stop offset="1" stop-color="#5b86cf" stop-opacity="0"/></radialGradient>
  <linearGradient id="bld" x1="0" y1="0" x2="0" y2="1"><stop offset="0" stop-color="#a9badb"/><stop offset="1" stop-color="#8aa3cf"/></linearGradient>
  <clipPath id="band"><rect x="0" y="24" width="213" height="57"/></clipPath>
</defs></svg>
<div class="handle"><i></i><i></i></div>
<!-- tile 1 -->
<div class="tile" style="top:29.500px">
 <svg class="vid" width="213" height="118" viewBox="0 0 213 118">
  <rect width="213" height="118" fill="#fdfdfe"/>
  <rect y="24" width="213" height="58" fill="url(#sky)"/>
  <g clip-path="url(#band)"><g filter="url(#b2)"><ellipse cx="30" cy="58" rx="40" ry="26" fill="url(#flw)"/><rect x="160" y="47" width="56" height="32" fill="url(#bld)"/><rect x="172" y="41" width="20" height="10" fill="#a9badb"/></g></g>
  <g transform="translate(213,0) scale(-1,1)" fill="#2a3f6e" font-size="4.800" font-weight="700"><text x="17" y="11">吉林大学商学与管理学院</text><circle cx="9" cy="9" r="5.500" fill="#9fb3d8"/><circle cx="9" cy="9" r="3" fill="#e8eef8"/><rect x="17" y="12.500" width="53" height=".800" fill="#5a6c90"/></g>
  <g transform="translate(213,0) scale(-1,1)" fill="#fff" font-weight="700"><text x="49" y="54" font-size="11.700">“疫路同行 静待花开”</text><text x="62" y="66.500" font-size="5.300">商学与管理学院云端系列讲座</text></g>
  <g filter="url(#b1)">
   <path d="M132 94l22 5 28 19h-62z" fill="#23273a"/>
   <path d="M80 118l4-22 12-8h26l12 8 4 22z" fill="#cfd6e6"/>
   <path d="M96 86h26v16l-13 8-13-8z" fill="#c79f8c"/>
   <ellipse cx="108.500" cy="63" rx="25" ry="31" fill="#c6a395"/>
   <path d="M79 52c-5-28 14-46 32-45 20 0 33 14 29 44l-3 10c0-14-4-22-10-26-12 3-30 3-38-1-6 6-8 14-7 28z" fill="#2e2826"/>
   <path d="M86 62h20M112 62h20" stroke="#a98c80" stroke-width="1" fill="none"/>
   <ellipse cx="96" cy="64" rx="10" ry="6.500" fill="none" stroke="#e7dcd6" stroke-opacity=".55" stroke-width="1.200"/><ellipse cx="121" cy="64" rx="10" ry="6.500" fill="none" stroke="#e7dcd6" stroke-opacity=".55" stroke-width="1.200"/>
   <path d="M100 84c5 2 11 2 16 0" stroke="#9d6a5f" stroke-width="1.300" fill="none"/>
  </g>
  <path d="M101.500 42l8.500-7 8.500 7" stroke="#fff" stroke-opacity=".85" stroke-width="1.600" fill="none"/>
 </svg>
 <div class="nm" style="width:81px"><svg width="18" height="20" viewBox="0 0 18 20"><rect x="5.500" y="1" width="7" height="11.500" rx="3.500" fill="#fff"/><path d="M2 9.500a7 7 0 0 0 14 0M9 16.500v2.500" stroke="#fff" stroke-width="1.700" fill="none"/></svg><span>李雪灵</span></div>
</div>
<!-- tile 2 -->
<div class="tile act" style="top:164.800px">
 <svg class="vid" width="213" height="118" viewBox="0 0 213 118">
  <rect width="213" height="118" fill="#fdfdfe"/>
  <rect y="24" width="213" height="57" fill="url(#sky)"/>
  <rect y="113.500" width="213" height="5" fill="#2d63b5"/>
  <g clip-path="url(#band)"><g filter="url(#b2)"><ellipse cx="185" cy="58" rx="40" ry="26" fill="url(#flw)"/><rect x="-3" y="47" width="84" height="32" fill="url(#bld)"/><rect x="38" y="42" width="22" height="10" fill="#a9badb"/></g></g>
  <g fill="#2a3f6e" font-size="4.800" font-weight="700"><text x="17" y="11">吉林大学商学与管理学院</text><circle cx="9" cy="9" r="5.500" fill="#9fb3d8"/><circle cx="9" cy="9" r="3" fill="#e8eef8"/><rect x="17" y="12.500" width="53" height=".800" fill="#5a6c90"/></g>
  <g fill="#fff" font-weight="700"><text x="49" y="54" font-size="11.700">“疫路同行 静待花开”</text><text x="62" y="66.500" font-size="5.300">商学与管理学院云端系列讲座</text></g>
  <g filter="url(#b1)">
   <path d="M82 14c6-4 40-6 50 2 6 16 5 60 4 86H68c-2-12-2-30 2-44 2-18 6-34 12-44z" fill="#27211f"/>
   <path d="M65 118c1-12 11-18 25-21h36c24 3 54 9 69 21z" fill="#a3939e"/>
   <path d="M88 74h36v24l-16 20-20-20z" fill="#d2ae9f"/>
   <path d="M90 97l-6 21h8zM127 97l10 21h-10z" fill="#e9dfda"/>
   <path d="M80 45c-2-20 10-32 28-32s27 12 26 35c0 18-8 32-22 36-14 2-30-14-32-39z" fill="#dbb9aa"/>
   <path d="M86 22c8-8 34-10 46 0-4-8-12-12-24-12s-18 4-22 12z" fill="#27211f"/>
   <ellipse cx="109" cy="60.500" rx="7" ry="4.500" fill="#d9746c"/>
   <path d="M92 35h11M116 35h11" stroke="#4a3531" stroke-width="1.800" fill="none"/>
   <path d="M104 48c2 2.500 7 2.500 9 0" stroke="#a67c6e" stroke-width="1.600" fill="none"/>
   <path d="M80 66c0 22 5 38 9 52" stroke="#f4f0ee" stroke-width="1.200" fill="none"/>
  </g>
 </svg>
 <div class="nm" style="width:66px"><svg width="18" height="20" viewBox="0 0 18 20"><rect x="5.500" y="1" width="7" height="11.500" rx="3.500" fill="#fff"/><rect x="6.500" y="3.500" width="5" height="8" rx="2.500" fill="#35c571"/><path d="M2 9.500a7 7 0 0 0 14 0M9 16.500v2.500" stroke="#dff3e6" stroke-width="1.700" fill="none"/></svg><span>周流</span></div>
</div>
<!-- tile 3 -->
<div class="tile" style="top:300.400px">
 <svg class="vid" width="213" height="118" viewBox="0 0 213 118">
  <rect width="213" height="118" fill="#fdfdfe"/>
  <rect y="23.500" width="213" height="57" fill="url(#sky)"/>
  <rect y="113.500" width="213" height="5" fill="#2d63b5"/>
  <g clip-path="url(#band)"><g filter="url(#b2)"><ellipse cx="185" cy="58" rx="40" ry="26" fill="url(#flw)"/><rect x="-3" y="47" width="84" height="32" fill="url(#bld)"/><rect x="38" y="42" width="22" height="10" fill="#a9badb"/></g></g>
  <g fill="#2a3f6e" font-size="4.800" font-weight="700"><text x="17" y="11">吉林大学商学与管理学院</text><circle cx="9" cy="9" r="5.500" fill="#9fb3d8"/><circle cx="9" cy="9" r="3" fill="#e8eef8"/><rect x="17" y="12.500" width="53" height=".800" fill="#5a6c90"/></g>
  <g fill="#fff" font-weight="700"><text x="49" y="53.500" font-size="11.700">“疫路同行 静待花开”</text><text x="62" y="66" font-size="5.300">商学与管理学院云端系列讲座</text></g>
  <g filter="url(#b1)">
   <path d="M86 118c-4-30-2-58 22-64 26-4 44 12 42 40l-3 24z" fill="#2f2422"/>
   <path d="M92 118c-4-24 0-48 24-50 22-1 30 20 28 36l-3 14z" fill="#d8b4a4"/>
   <path d="M90 86c2-18 12-24 28-24 14 0 24 8 27 22-8-8-14-12-26-12-12 0-22 4-29 14z" fill="#2f2422"/>
   <path d="M99 95h13M122 95h13" stroke="#8a6a60" stroke-width="1.200" fill="none"/>
   <path d="M113 112c3 1.500 6 1.500 8 0" stroke="#a67c6e" stroke-width="1.200" fill="none"/>
  </g>
 </svg>
 <div class="nm" style="width:62px;bottom:3.500px;height:26px"><svg width="18" height="20" viewBox="0 0 18 20"><rect x="5.500" y="1" width="7" height="11.500" rx="3.500" fill="#fff"/><path d="M2 9.500a7 7 0 0 0 14 0M9 16.500v2.500" stroke="#fff" stroke-width="1.700" fill="none"/></svg><span style="font-size:15.500px">Fan</span></div>
</div>
<!-- tile 4 -->
<div class="tile dk" style="top:435.600px">
 <div class="abs" style="left:71.700px;top:15.500px;width:69.500px;height:69.500px;border-radius:50%;background:#0e71f4;color:#fff;font-size:23.500px;line-height:70px;text-align:center">刘京</div>
 <div class="abs" style="left:1px;bottom:1.500px;width:28px;height:28px;background:#f6821f"><svg width="28" height="28" viewBox="0 0 28 28"><circle cx="14" cy="9.500" r="4.300" fill="#fff"/><path d="M4.500 23.500c1-6 4-8.500 9.500-8.500s8.500 2.500 9.500 8.500z" fill="#fff"/></svg></div>
 <div class="nm" style="left:29px;width:69px;background:#121213"><svg width="18" height="20" viewBox="0 0 18 20"><rect x="5.500" y="1" width="7" height="11.500" rx="3.500" fill="#fff"/><path d="M2 9.500a7 7 0 0 0 14 0M9 16.500v2.500" stroke="#fff" stroke-width="1.700" fill="none"/><path d="M1.500 16.500L16.500 2" stroke="#e0525c" stroke-width="1.700"/></svg><span style="font-size:14.500px">刘京</span></div>
</div>
<!-- tile 5 -->
<div class="tile dk" style="top:571px">
 <svg class="abs" style="left:45px;top:8.800px" width="120" height="84" viewBox="0 0 120 84">
  <defs><clipPath id="av"><circle cx="59.900" cy="41.300" r="33"/></clipPath></defs>
  <g clip-path="url(#av)"><rect width="120" height="84" fill="#2f2626"/>
   <g filter="url(#b1)"><path d="M26 32l9-14v14zM26 56h8l8 16-10 2z" fill="#8f8f8f"/><path d="M54 32c0-6 4-9 10-8l4 8z" fill="#b98a78"/><path d="M56 56h18c-2 5-5 7-9 7s-7-3-9-7z" fill="#c39583"/><path d="M66 66l8-3 2 10-7 1z" fill="#c9978a"/><path d="M36 30c4-12 14-14 26-10-8 2-14 6-16 12zM40 60c6 8 12 12 22 12l-4 8H38zM76 58c4 4 6 10 4 16l8-6c2-6 0-12-2-16z" fill="#4a3128"/><path d="M70 14c14 2 22 14 22 28l-8 16c0-18-4-32-14-44z" fill="#2d2432"/></g></g>
  <rect x="14" y="30.600" width="92" height="26.600" fill="#292828" fill-opacity=".84"/>
  <path d="M59 41l7.600 7.300 7.600-7.300" stroke="#fff" stroke-width="1.800" fill="none"/>
 </svg>
 <div class="nm" style="width:68px;background:#121213"><svg width="18" height="20" viewBox="0 0 18 20"><rect x="5.500" y="1" width="7" height="11.500" rx="3.500" fill="#fff"/><path d="M2 9.500a7 7 0 0 0 14 0M9 16.500v2.500" stroke="#fff" stroke-width="1.700" fill="none"/><path d="M1.500 16.500L16.500 2" stroke="#e0525c" stroke-width="1.700"/></svg><span style="font-size:14.500px">果子</span></div>
</div>
</div>
<div id="bottom">
 <!-- mic (cut off at left) -->
 <svg class="abs" style="left:-16px;top:10px" width="26" height="32" viewBox="0 0 26 32"><rect x="6" y="0" width="14" height="22" rx="7" fill="#4a4a4a"/><path d="M1.500 14a11.500 11.500 0 0 0 23 0" stroke="#4a4a4a" stroke-width="2.200" fill="none"/><path d="M13 26v3M5 30h16" stroke="#4a4a4a" stroke-width="2.200"/></svg>
 <div class="blabel" style="left:-16.500px">静音</div>
 <svg class="abs ch" style="left:36.500px;top:30.800px" width="13" height="9" viewBox="0 0 13 9"><path d="M1.200 7.500L6.500 2l5.300 5.500" stroke="#4a4a4a" stroke-width="1.900" fill="none"/></svg>
 <svg class="abs" style="left:70px;top:14.500px" width="35" height="23" viewBox="0 0 35 23"><rect x="0" y=".500" width="24.500" height="22" rx="4" fill="#505050"/><path d="M26 8.500l7-5.500a.6 .6 0 0 1 1 .5v16a.6 .6 0 0 1-1 .5l-7-5.500z" fill="#505050"/></svg>
 <div class="blabel" style="left:58px">停止视频</div>
 <svg class="abs ch" style="left:124.500px;top:30.800px" width="13" height="9" viewBox="0 0 13 9"><path d="M1.200 7.500L6.500 2l5.300 5.500" stroke="#4a4a4a" stroke-width="1.900" fill="none"/></svg>
 <!-- share -->
 <svg class="abs" style="left:359px;top:14.500px" width="34" height="29" viewBox="0 0 34 29"><rect x="0" y=".500" width="33.500" height="21" rx="3" fill="#3d3d3d"/><rect x="9" y="25" width="16" height="2.200" fill="#3d3d3d"/><path d="M19.500 5.500l6.500 5-6.500 5v-3c-4-.500-6.500 1-8.500 4 .500-5 3-8 8.500-8z" fill="#fff"/></svg>
 <div class="blabel" style="left:346.500px">共享屏幕</div>
 <svg class="abs ch" style="left:413.500px;top:30.800px" width="13" height="9" viewBox="0 0 13 9"><path d="M1.200 7.500L6.500 2l5.300 5.500" stroke="#4a4a4a" stroke-width="1.900" fill="none"/></svg>
 <!-- invite -->
 <svg class="abs" style="left:450px;top:11px" width="34" height="30" viewBox="0 0 34 30"><circle cx="15" cy="7" r="6.300" fill="#4a4a4a"/><path d="M1 29c0-9 5-13.500 13.500-13.500 5 0 8 1.500 10 4V29z" fill="#4a4a4a"/><circle cx="25" cy="22" r="7.800" fill="#4a4a4a" stroke="#fff" stroke-width="1.600"/><path d="M25 18v8M21 22h8" stroke="#fff" stroke-width="2"/></svg>
 <div class="blabel" style="left:451px">邀请</div>
 <!-- members -->
 <svg class="abs" style="left:524px;top:11px" width="34" height="30" viewBox="0 0 34 30"><path d="M21 3a6.500 6.500 0 0 1 0 10M26 17c4 2 6 6 6 12" stroke="#4a4a4a" stroke-width="1.300" fill="none"/><circle cx="16" cy="7.500" r="6.700" fill="#4a4a4a"/><path d="M1.500 29c0-9 5-14 14.500-14s14.500 5 14.500 14z" fill="#4a4a4a"/></svg>
 <div class="blabel" style="left:512px">成员(13)</div>
 <!-- chat -->
 <svg class="abs" style="left:600px;top:14.500px" width="29" height="29" viewBox="0 0 29 29"><path d="M4 0h20.500a4 4 0 0 1 4 4v15a4 4 0 0 1-4 4H25l-5.500 5v-5H4a4 4 0 0 1-4-4V4a4 4 0 0 1 4-4z" fill="#4a4a4a"/><g fill="#fff"><circle cx="7.500" cy="11.500" r="2.100"/><circle cx="14.200" cy="11.500" r="2.100"/><circle cx="21" cy="11.500" r="2.100"/></g></svg>
 <div class="blabel" style="left:600px">聊天</div>
 <!-- record -->
 <svg class="abs" style="left:683px;top:10px" width="32" height="32" viewBox="0 0 32 32"><circle cx="16" cy="16" r="14" stroke="#454545" stroke-width="2.200" fill="none"/><circle cx="16" cy="16" r="11" fill="#454545"/></svg>
 <div class="blabel" style="left:684px">录制</div>
 <!-- apps -->
 <svg class="abs" style="left:770px;top:11.500px" width="31" height="30" viewBox="0 0 31 30"><g fill="#4a4a4a"><rect x="0" y="1" width="12.500" height="12.500" rx="2.500"/><rect x="0" y="16" width="12.500" height="12.500" rx="2.500"/><rect x="15.500" y="16" width="12.500" height="12.500" rx="2.500"/></g><rect x="17" y="2" width="10" height="10" rx="1.500" transform="rotate(45 22 7)" stroke="#4a4a4a" stroke-width="2" fill="none"/></svg>
 <div class="blabel" style="left:770px">应用</div>
 <!-- settings -->
 <svg class="abs" style="left:844px;top:10px" width="32" height="32" viewBox="-16 -16 32 32"><g fill="#454545"><circle r="11.300"/><g id="gt"><rect x="-4.200" y="-15.300" width="8.400" height="8" rx="1.800"/></g><use href="#gt" transform="rotate(60)"/><use href="#gt" transform="rotate(120)"/><use href="#gt" transform="rotate(180)"/><use href="#gt" transform="rotate(240)"/><use href="#gt" transform="rotate(300)"/></g><circle r="5.300" fill="#fff"/></svg>
 <div class="blabel" style="left:846px">设置</div>
 <!-- leave -->
 <div class="abs" style="left:1154px;top:11px;width:105px;height:50px;border:1px solid #eb8d8f;border-radius:3px;color:#e24b4f;font-size:18.500px;line-height:51px;text-align:center">离开会议</div>
</div>
<div id="edge"><div class="abs" style="left:2px;top:3px;width:2px;height:13px;background:#5a4636"></div></div>
</div>
</body>
</html>
